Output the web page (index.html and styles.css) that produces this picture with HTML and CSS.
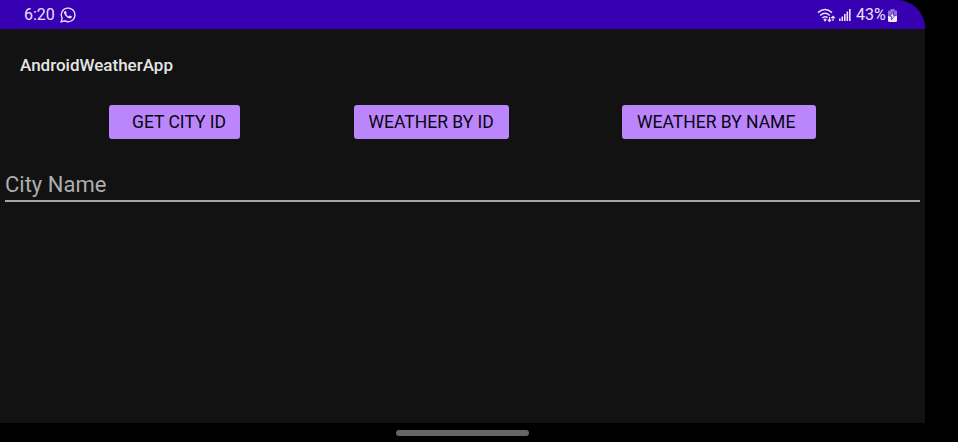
FILE: index.html
```html
<!DOCTYPE html>
<html lang="en">
<head>
<meta charset="utf-8">
<title>AndroidWeatherApp</title>
<link rel="stylesheet" href="styles.css">
</head>
<body>
<div class="screen">
  <header class="status">
    <span class="time">6:20</span>
    <svg class="chat" width="16" height="16" viewBox="0 0 24 24" aria-hidden="true">
      <path d="M1.8 22.2l1.5-5.4A10.2 10.2 0 1 1 7.2 20.700z" fill="none" stroke="#e9e2fa" stroke-width="2"/>
      <path d="M8.700 6.200c-.4-.7-1.500-.4-2.100.5-.8 1.200-.6 2.800.2 4.200 1.400 2.500 3.500 4.700 6.400 5.800 1.800.7 3.500.3 4.300-1.100.4-.7.4-1.400 0-1.600l-2.400-1.200c-.7-.3-1.200 1.300-1.900 1.300-1.100 0-3.700-2.400-4-3.500-.1-.6 1-1.100.8-1.800z" fill="#e9e2fa"/>
    </svg>
    <div class="indicators">
      <svg class="wifi" width="19" height="15" viewBox="0 0 19 15" aria-hidden="true">
        <g fill="none" stroke="#e9e2fa" stroke-width="1.450">
          <path d="M1 4.600Q8 -1.500 15 4.600"/>
          <path d="M3.100 7.500Q8 3 12.900 7.500"/>
          <path d="M5.200 10Q8 7.600 10.500 9.600"/>
        </g>
        <path d="M8 10.300l1.800 1.500L8 13.700l-1.700-1.900z" fill="#e9e2fa"/>
        <path d="M12.500 9v4.200M10.800 11.600l1.700 1.800 1.700-1.800M16 13V8.400M14.200 10.200L16 8.300l1.800 1.900" fill="none" stroke="#e9e2fa" stroke-width="1.200"/>
      </svg>
      <svg class="signal" width="12" height="12" viewBox="0 0 12 12" aria-hidden="true">
        <path d="M0 9.500h1.600V12H0zM2.500 7.500h1.600V12H2.500zM5 5h1.600v7H5zM7.500 2.500h1.600V12H7.500zM10 0h1.600v12H10z" fill="#e9e2fa"/>
      </svg>
      <span class="percent">43%</span>
      <svg class="battery" width="9" height="13" viewBox="0 0 9 13" aria-hidden="true">
        <path d="M2.500 0h4v1.400H8q1 0 1 1V7H0V2.400q0-1 1-1h1.500z" fill="#8f70d7"/>
        <path d="M0 7h9v4.500Q9 13 7.500 13h-6Q0 13 0 11.500z" fill="#f0eafb"/>
        <path d="M5.500 2.700L1.800 7.300h2L3.400 10.700 7.200 6.200h-2z" fill="#fff" stroke="#3700b3" stroke-width=".7"/>
      </svg>
    </div>
  </header>
  <main class="app">
    <h1 class="title">AndroidWeatherApp</h1>
    <div class="actions">
      <button class="btn btn-city">GET CITY ID</button>
      <button class="btn btn-id">WEATHER BY ID</button>
      <button class="btn btn-name">WEATHER BY NAME</button>
    </div>
    <div class="field">City Name</div>
  </main>
</div>
<footer class="nav"><div class="handle"></div></footer>
</body>
</html>
```
FILE: styles.css
```css
* { box-sizing: border-box; }
body {
  margin: 0;
  width: 958px;
  height: 442px;
  overflow: hidden;
  background: #000;
  font-family: Roboto, sans-serif;
}
.screen {
  display: flex;
  flex-direction: column;
  width: 925px;
  height: 423px;
  background: #121212;
  border-top-right-radius: 28px;
  overflow: hidden;
}
.status {
  display: flex;
  align-items: center;
  height: 29px;
  padding: 1px 28px 0 24px;
  background: #3700b3;
  color: #e9e2fa;
  font-size: 16px;
  line-height: 28px;
}
.time { width: 36px; }
.indicators {
  display: flex;
  align-items: center;
  margin-left: auto;
}
.signal { margin: 0 5px 0 3px; }
.percent { width: 32px; white-space: nowrap; }
.title {
  margin: 24px 0 0 20px;
  color: #e5e5e5;
  font-size: 17px;
  font-weight: 500;
  line-height: 24px;
}
.actions {
  display: flex;
  justify-content: space-between;
  margin: 28px 109px 0;
}
.btn {
  height: 34px;
  padding: 1px 0 0 15px;
  border: 0;
  border-radius: 3px;
  background: #bb86fc;
  color: #080510;
  font: 400 17.500px/33px Roboto, sans-serif;
  text-align: left;
  white-space: nowrap;
}
.btn-city { width: 131px; padding-left: 23px; }
.btn-id { width: 155px; }
.btn-name { width: 194px; }
.field {
  height: 37px;
  margin: 26px 5px 0;
  border-bottom: 2px solid #a5a5a5;
  color: #adadad;
  font-size: 22px;
  line-height: 39px;
}
.nav {
  display: flex;
  justify-content: center;
  width: 925px;
  height: 19px;
  padding-top: 7px;
}
.handle {
  width: 133px;
  height: 6px;
  border-radius: 3px;
  background: #656565;
}
```
